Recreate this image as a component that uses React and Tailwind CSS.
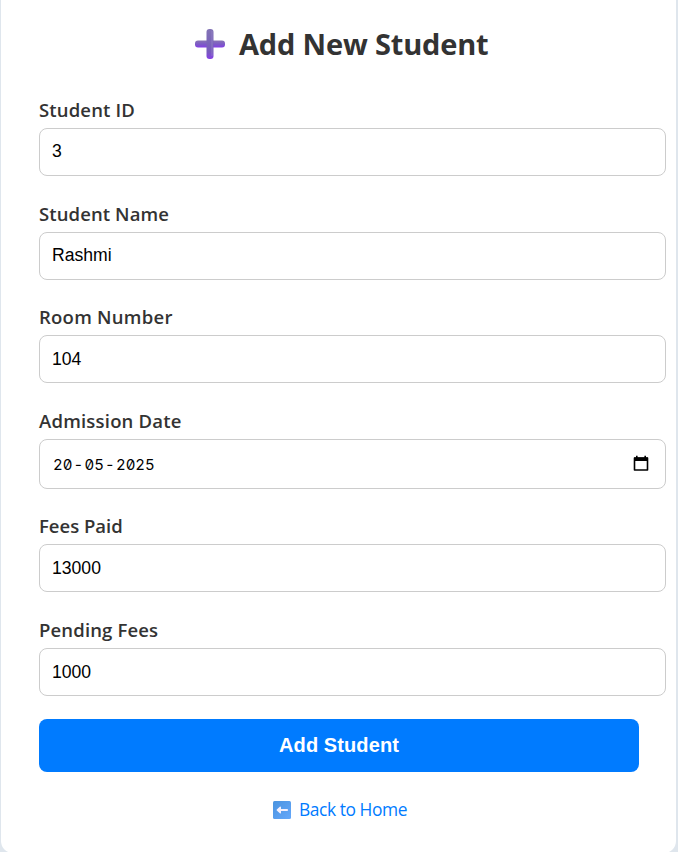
import React from "react";

const label = "block h-7 whitespace-nowrap font-['Open_Sans','Noto_Sans',sans-serif] text-[18.5px] leading-5 font-semibold text-[#333]";
const box = "flex w-[627px] items-center rounded-[8px] border border-[#ccc] bg-white px-[12px] font-['Liberation_Sans',Arial,sans-serif] text-[17.6px] leading-none text-black";

function Field({ name, value, labelClass = "tracking-[0.15px]", boxClass = "pb-px", className }) {
  return (
    <div className={className}>
      <span className={`${label} ${labelClass}`}>{name}</span>
      <div className={`${box} ${boxClass} h-12`}>{value}</div>
    </div>
  );
}

function PlusIcon() {
  return (
    <svg width="30" height="30" viewBox="0 0 30 30" className="shrink-0">
      <defs>
        <linearGradient id="bar" x1="0" y1="0" x2="0" y2="1">
          <stop offset="0" stopColor="#8874b4" />
          <stop offset=".5" stopColor="#7d5cc4" />
          <stop offset="1" stopColor="#8440e4" />
        </linearGradient>
        <linearGradient id="stem" x1="0" y1="0" x2="0" y2="1">
          <stop offset="0" stopColor="#8273b5" />
          <stop offset=".75" stopColor="#765bbb" />
          <stop offset="1" stopColor="#8740e6" />
        </linearGradient>
      </defs>
      <rect x="0" y="11.5" width="30" height="7" rx="3" fill="url(#bar)" />
      <rect x="11.5" y="0" width="7" height="30" rx="3" fill="url(#stem)" />
      <path d="M17 2v25" stroke="#9c8bcc" strokeWidth="1" opacity=".6" />
    </svg>
  );
}

function BackIcon() {
  return (
    <svg width="18" height="18" viewBox="0 0 18 18" className="shrink-0">
      <defs>
        <linearGradient id="tile" x1="0" y1="0" x2="1" y2="1">
          <stop offset="0" stopColor="#4a93df" />
          <stop offset="1" stopColor="#65a8fb" />
        </linearGradient>
      </defs>
      <rect width="18" height="18" rx="1.5" fill="url(#tile)" />
      <path d="M14 9H6" stroke="#f5f0fc" strokeWidth="2.2" strokeLinecap="round" />
      <path d="M7.3 6.3 4.3 9l3 2.7z" fill="#f5f0fc" stroke="#f5f0fc" strokeWidth="1.4" strokeLinejoin="round" />
    </svg>
  );
}

export default function App() {
  return (
    <div className="h-[852px] w-[678px] overflow-hidden bg-[#dfe6ed] pl-px">
      <main className="flex h-[853px] w-[675px] flex-col rounded-b-[12px] bg-white pl-[38px]">
        <h1 className="mt-[24px] flex h-10 items-center pl-[156px] font-['Open_Sans','Noto_Sans',sans-serif] text-[29px] font-bold whitespace-nowrap text-[#333]">
          <PlusIcon />
          <span className="ml-[14px] tracking-[-0.17px]">Add New Student</span>
        </h1>
        <Field name="Student ID" value="3" className="mt-[36px]" />
        <Field name="Student Name" value="Rashmi" labelClass="tracking-[0.1px]" className="mt-[28px]" />
        <Field name="Room Number" value="104" labelClass="tracking-[0.25px]" boxClass="pt-px" className="mt-[27px]" />
        <div className="mt-[28px]">
          <span className={`${label} tracking-[0.2px]`}>Admission Date</span>
          <div className={`${box} h-[50px] justify-between pr-4`}>
            <span className="flex pl-px font-['Inter',sans-serif] text-[15px] tabular-nums slashed-zero">
              <span>20</span>
              <span className="w-[12px] text-center">-</span>
              <span>05</span>
              <span className="w-[12px] text-center">-</span>
              <span>2025</span>
            </span>
            <svg width="16" height="17" viewBox="0 0 16 17" className="mb-px">
              <path d="M1.5 3h13v12h-13z" fill="none" stroke="#000" strokeWidth="1.6" strokeLinejoin="round" />
              <path d="M1 2.5h14V6H1zM3 .8h1.6v2H3zM11.4.8H13v2h-1.6z" />
            </svg>
          </div>
        </div>
        <Field name="Fees Paid" value="13000" labelClass="tracking-[0px]" boxClass="pt-px" className="mt-[27px]" />
        <Field name="Pending Fees" value="1000" boxClass="pt-px" className="mt-[28px]" />
        <button className="mt-[23px] h-[53px] w-[600px] rounded-[8px] bg-[#007bff] pb-[2px] font-['Liberation_Sans',Arial,sans-serif] text-[20px] font-bold tracking-[0.1px] text-white">
          Add Student
        </button>
        <a className="mt-[24px] flex h-7 items-center pl-[234px] font-['Open_Sans','Noto_Sans',sans-serif] text-[17.4px] tracking-[-0.43px] whitespace-nowrap text-[#007bff]">
          <BackIcon />
          <span className="mb-[2px] ml-[8px]">Back to Home</span>
        </a>
      </main>
    </div>
  );
}
